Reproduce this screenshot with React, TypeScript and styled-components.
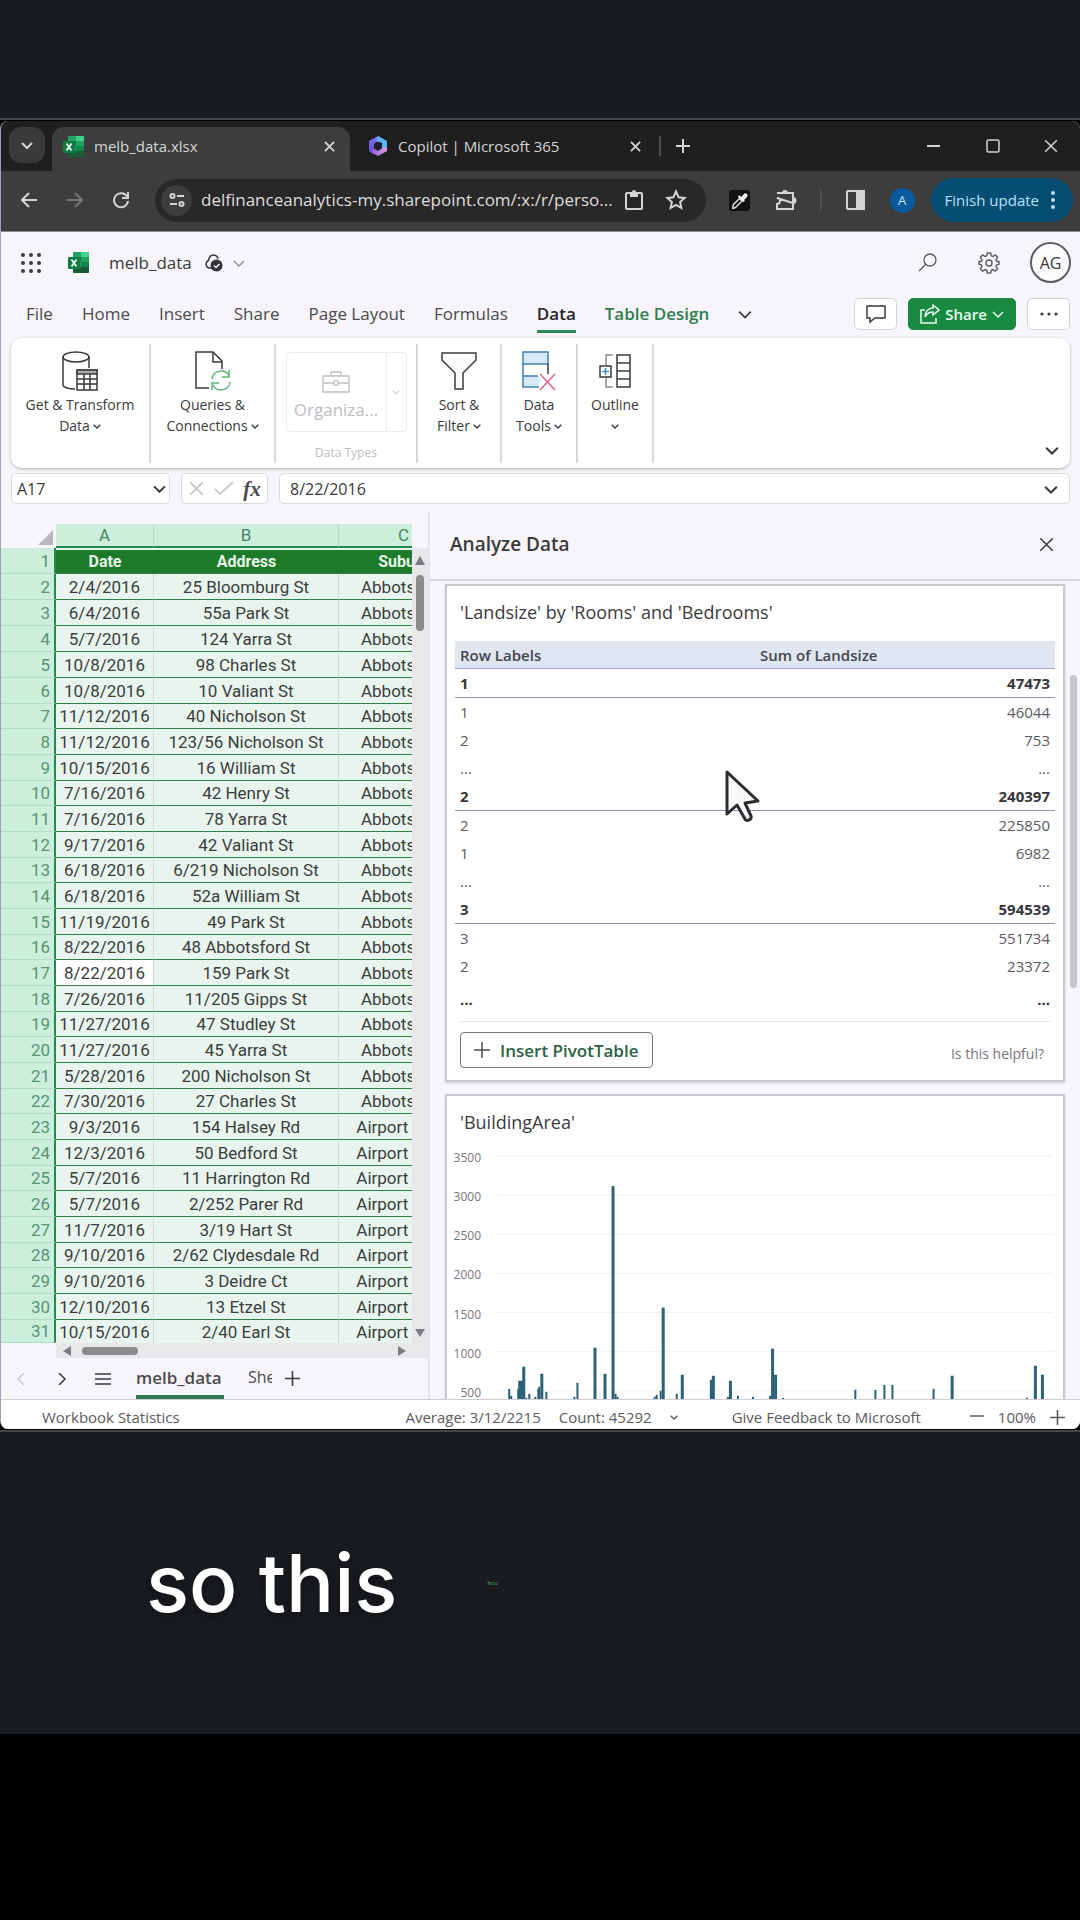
import React from "react";
import styled, { createGlobalStyle, css } from "styled-components";

const GlobalStyle = createGlobalStyle`
  *, *::before, *::after { box-sizing: border-box; }
  body { margin: 0; background: #000; }
  button, input { font: inherit; color: inherit; margin: 0; padding: 0; border: 0; background: none; }
  svg { display: block; flex: none; }
`;

const ui = `"Segoe UI", "Open Sans", "Noto Sans", sans-serif`;

const Page = styled.div`
  min-height: 100vh;
  background: #000;
  font-family: ${ui};
  color: #3b3a3d;
`;

const Stage = styled.div`
  background: #181c1e;
  padding-top: 118px;
`;

const Frame = styled.div`
  border-top: 2px solid #444748;
  border-bottom: 2px solid #444748;
  background: #000;
  padding: 1px 0;
`;

const Window = styled.main`
  border-left: 1px solid #9aa3b5;
  border-radius: 8px;
  overflow: hidden;
  background: #f7f5f9;
`;

/* ---------- browser chrome ---------- */

const TabStrip = styled.div`
  display: flex;
  height: 50px;
  padding: 6px 8px 0;
  background: #1f1f1f;
  color: #d4d4d4;
  font-size: 15px;
`;

const TabSearch = styled.button`
  display: grid;
  place-items: center;
  width: 36px;
  height: 36px;
  margin-right: 7px;
  border-radius: 12px;
  background: #3a3a3a;
`;

const Tab = styled.div<{ $active?: boolean }>`
  display: flex;
  align-items: center;
  gap: 10px;
  width: ${(p) => (p.$active ? 298 : 309)}px;
  min-width: 0;
  height: 44px;
  padding: 0 ${(p) => (p.$active ? 15 : 18)}px 6px ${(p) => (p.$active ? 11 : 18)}px;
  border-radius: 12px 12px 0 0;
  background: ${(p) => (p.$active ? "#3d3d3d" : "transparent")};
`;

const TabTitle = styled.span`
  flex: 1;
  min-width: 0;
  overflow: hidden;
  white-space: nowrap;
`;

const PlainButton = styled.button`
  display: grid;
  place-items: center;
  flex: none;
`;

const StripTail = styled.div`
  display: flex;
  align-items: center;
  flex: 1;
  height: 38px;
`;

const ThinRule = styled.span<{ $inset?: number }>`
  width: 2px;
  height: 20px;
  margin: 0 ${(p) => p.$inset ?? 0}px;
  background: #4e4e4e;
`;

const NewTab = styled(PlainButton)`
  width: 44px;
  height: 28px;
`;

const WindowButtons = styled.div`
  display: flex;
  margin-left: auto;
`;

const WindowButton = styled(PlainButton)`
  width: 59px;
  height: 32px;

  &:last-child {
    width: 42px;
    margin-left: 8px;
  }
`;

const Toolbar = styled.div`
  display: flex;
  align-items: center;
  height: 61px;
  padding: 0 7px 2px 5px;
  border-bottom: 1px solid #8a8a8c;
  background: #3d3d3d;
  color: #d4d4d4;
`;

const NavButton = styled(PlainButton)<{ $dim?: boolean }>`
  width: 46px;
  height: 40px;
  color: ${(p) => (p.$dim ? "#777" : "inherit")};
`;

const Omnibox = styled.div`
  display: flex;
  align-items: center;
  flex: 1;
  min-width: 0;
  height: 43px;
  margin-left: 11px;
  padding: 0 9px 0 6px;
  border-radius: 22px;
  background: #282828;
`;

const SiteChip = styled(PlainButton)`
  width: 31px;
  height: 31px;
  border-radius: 50%;
  background: #3d3d3d;
`;

const AddressInput = styled.input`
  flex: 1;
  min-width: 0;
  margin-left: 9px;
  font-size: 17px;
  line-height: 24px;
  color: #dedede;
`;

const OmniButton = styled(PlainButton)`
  width: 42px;
  height: 40px;
`;

const Extensions = styled.div`
  display: flex;
  align-items: center;
  margin: 0 5px 0 10px;
`;

const ExtButton = styled(PlainButton)`
  width: 47px;
  height: 40px;
`;

const ProfileDot = styled.span`
  display: grid;
  place-items: center;
  width: 25px;
  height: 25px;
  border-radius: 50%;
  background: #0b5a9e;
  color: #cfe4f7;
  font-size: 13px;
`;

const UpdateButton = styled.button`
  display: flex;
  align-items: center;
  gap: 12px;
  height: 44px;
  padding: 0 18px 0 14px;
  border-radius: 22px;
  background: #064d73;
  color: #b5e0f8;
  font-size: 15px;
`;

/* ---------- workbook header ---------- */

const TitleRow = styled.header`
  display: flex;
  align-items: center;
  height: 61px;
  padding: 0 9px 0 20px;
`;

const AppMark = styled.span`
  margin-left: 27px;
`;

const FileName = styled.h1`
  margin: 0 12px 0 20px;
  font-size: 17px;
  line-height: 24px;
  font-weight: 400;
`;

const FileMenu = styled(PlainButton)`
  margin-left: 10px;
  color: #8a898d;
`;

const TitleTools = styled.div`
  display: flex;
  align-items: center;
  margin-left: auto;
`;

const ToolButton = styled(PlainButton)`
  width: 62px;
  height: 40px;
  color: #5b5a5e;
`;

const Account = styled.button`
  width: 41px;
  height: 41px;
  margin-left: 10px;
  border: 2px solid #5d5c60;
  border-radius: 50%;
  background: #fbfafc;
  font-size: 16px;
`;

const MenuRow = styled.nav`
  display: flex;
  align-items: flex-start;
  height: 45px;
  padding: 5px 10px 0 25px;
`;

const MenuItem = styled.button<{ $active?: boolean; $accent?: boolean }>`
  margin-right: 29px;
  padding: 4px 0;
  border-bottom: 3px solid ${(p) => (p.$active ? "#2b8a57" : "transparent")};
  font-size: 17px;
  line-height: 24px;
  white-space: nowrap;
  color: ${(p) => (p.$accent ? "#2f7d51" : p.$active ? "#252427" : "#4b4a4e")};
  font-weight: ${(p) => (p.$active || p.$accent ? 600 : 400)};
`;

const MoreTabs = styled(PlainButton)`
  height: 32px;
`;

const MenuActions = styled.div`
  display: flex;
  gap: 11px;
  margin-left: auto;
`;

const ActionButton = styled.button<{ $primary?: boolean }>`
  display: flex;
  align-items: center;
  justify-content: center;
  gap: 5px;
  width: ${(p) => (p.$primary ? 108 : 43)}px;
  height: 32px;
  border: 1px solid #d6d4d8;
  border-radius: 5px;
  background: #fff;
  font-size: 15px;
  ${(p) =>
    p.$primary &&
    css`
      border-color: #188a42;
      background: #188a42;
      color: #e9fbee;
      font-weight: 600;
    `}
`;

const Ribbon = styled.section`
  display: flex;
  height: 130px;
  margin: 0 10px;
  padding: 6px 11px 5px 0;
  border-radius: 10px;
  background: #fff;
  box-shadow: 0 1px 3px rgba(0, 0, 0, 0.28);
`;

const Group = styled.div<{ $width: number }>`
  width: ${(p) => p.$width}px;
  border-right: 2px solid #d9d8da;
`;

const GroupButton = styled.button`
  display: flex;
  flex-direction: column;
  align-items: center;
  width: 100%;
  padding-top: 7px;
  font-size: 14px;
  line-height: 21px;
`;

const GroupIcon = styled.span`
  display: grid;
  place-items: center;
  height: 40px;
  margin-bottom: 3px;
`;

const GroupLine = styled.span`
  display: flex;
  align-items: center;
  gap: 3px;
  min-height: 21px;
  white-space: nowrap;
`;

const DataTypes = styled.div`
  display: flex;
  flex-direction: column;
  align-items: center;
  padding-top: 8px;
  color: #bdbcbf;
`;

const Gallery = styled.div`
  display: flex;
  width: 121px;
  height: 80px;
  border: 1px solid #ebeaec;
  border-radius: 4px;
`;

const GalleryItem = styled.button`
  display: flex;
  flex-direction: column;
  align-items: center;
  justify-content: flex-end;
  gap: 5px;
  width: 100px;
  padding-bottom: 9px;
  border-right: 1px solid #ebeaec;
  font-size: 17px;
  line-height: 24px;
`;

const GalleryMore = styled(PlainButton)`
  flex: 1;
`;

const GroupCaption = styled.span`
  margin-top: 12px;
  font-size: 12px;
  line-height: 18px;
`;

const RibbonToggle = styled(PlainButton)`
  align-self: flex-end;
  margin-left: auto;
  height: 26px;
`;

const FormulaRow = styled.div`
  display: flex;
  gap: 11px;
  margin: 5px 10px 7px;
`;

const FieldBox = styled.div<{ $width?: number }>`
  display: flex;
  align-items: center;
  height: 31px;
  ${(p) => (p.$width ? `width: ${p.$width}px;` : "flex: 1; min-width: 0;")}
  border: 1px solid #dcdadf;
  border-radius: 5px;
  background: #fff;
`;

const FieldInput = styled.input<{ $inset: number }>`
  flex: 1;
  min-width: 0;
  padding-left: ${(p) => p.$inset}px;
  font-size: 16px;
  line-height: 22px;
`;

const FieldButton = styled(PlainButton)<{ $dim?: boolean }>`
  width: 28px;
  height: 28px;
  color: ${(p) => (p.$dim ? "#bdbcbf" : "inherit")};
`;

const OpenButton = styled(PlainButton)<{ $end: number }>`
  margin-right: ${(p) => p.$end}px;
`;

const Fx = styled.i`
  font-family: "Liberation Serif", serif;
  font-size: 21px;
  line-height: 24px;
  font-weight: 700;
  color: #4b4a4e;
`;

/* ---------- sheet ---------- */

const Workspace = styled.div`
  display: grid;
  grid-template-columns: minmax(0, 427fr) minmax(0, 652fr);
  border-bottom: 1px solid #cfcdd1;
`;

const SheetColumn = styled.section`
  padding-top: 13px;
`;

const GridArea = styled.div`
  display: flex;
`;

const GridClip = styled.div`
  flex: 1;
  min-width: 0;
  overflow: hidden;
`;

const Sheet = styled.table`
  width: 468px;
  table-layout: fixed;
  border-collapse: separate;
  border-spacing: 0;
  font-family: Roboto, "Liberation Sans", sans-serif;
  font-size: 17px;
  line-height: 20px;
  color: #3a3f3d;
`;

const Column = styled.col<{ $width: number }>`
  width: ${(p) => p.$width}px;
`;

const ColHead = styled.th`
  height: 24px;
  padding: 0;
  border-right: 1px solid #b3dcc8;
  border-bottom: 2px solid #2a8454;
  background: #ccefdc;
  color: #488264;
  font-weight: 400;
`;

const Corner = styled.td`
  height: 24px;
  padding: 0 3px 3px 0;
  vertical-align: bottom;

  svg { margin-left: auto; }
`;

const SheetRow = styled.tr`
  height: 26px;
  &:nth-child(3n + 7) { height: 25px; }
  &:last-child { height: 23px; }
`;

const RowHead = styled.th`
  padding: 0 4px 0 0;
  border-right: 2px solid #2a8454;
  border-bottom: 1px solid #b3dcc8;
  background: #ccefdc;
  color: #5a9276;
  font-weight: 400;
  text-align: right;
`;

const Cell = styled.td<{ $head?: boolean; $active?: boolean }>`
  padding: 0;
  overflow: hidden;
  text-align: center;
  white-space: nowrap;
  border-right: 1px solid #c7dcd2;
  border-bottom: 1px solid #2f7f4a;
  background: ${(p) => (p.$active ? "#fff" : "#e9f4ef")};

  ${SheetRow}:last-child & { border-bottom: 0; }

  ${(p) =>
    p.$head &&
    css`
      border-top: 2px solid #e4f7ec;
      border-right: 0;
      background: #1d7a2b;
      color: #e6f5e8;
      font-size: 16px;
      font-weight: 700;
    `}
`;

const VScroll = styled.div`
  display: flex;
  flex-direction: column;
  align-items: center;
  width: 16px;
  margin-top: 24px;
  padding: 8px 0 6px;
  background: #e9e7e9;
`;

const VThumb = styled.span`
  width: 8px;
  height: 56px;
  margin: 10px 0 auto;
  border-radius: 4px;
  background: #8d8b8e;
`;

const HScroll = styled.div`
  display: flex;
  align-items: center;
  height: 15px;
  margin-left: 55px;
  padding: 0 22px 0 7px;
  background: #e9e7e9;
`;

const HThumb = styled.span`
  width: 56px;
  height: 8px;
  margin: 0 auto 0 11px;
  border-radius: 4px;
  background: #8d8b8e;
`;

const SheetTabs = styled.div`
  display: flex;
  align-items: stretch;
  height: 41px;
  padding-left: 12px;
`;

const SheetNav = styled(PlainButton)<{ $width: number; $dim?: boolean }>`
  width: ${(p) => p.$width}px;
  color: ${(p) => (p.$dim ? "#c7c5c9" : "inherit")};
`;

const TabGroup = styled.div`
  display: flex;
  margin-left: 25px;
`;

const SheetTab = styled.button<{ $active?: boolean }>`
  flex: none;
  width: ${(p) => (p.$active ? 88 : 24)}px;
  margin-right: ${(p) => (p.$active ? 24 : 9)}px;
  overflow: hidden;
  white-space: nowrap;
  text-align: left;
  border-top: 1px solid transparent;
  border-bottom: 4px solid ${(p) => (p.$active ? "#2f7d51" : "transparent")};
  font-size: ${(p) => (p.$active ? 17 : 16)}px;
  font-weight: ${(p) => (p.$active ? 600 : 400)};
  color: #4b4a4e;
`;

/* ---------- Analyze Data pane ---------- */

const Pane = styled.aside`
  contain: size;
  overflow: hidden;
  border-left: 2px solid #e6e4e8;
`;

const PaneHead = styled.div`
  display: flex;
  align-items: center;
  justify-content: space-between;
  height: 70px;
  padding: 0 26px 2px 20px;
  border-bottom: 2px solid #d8d6da;
`;

const PaneTitle = styled.h2`
  margin: 0;
  font-size: 19px;
  line-height: 24px;
  font-weight: 600;
`;

const PaneBody = styled.div`
  display: flex;
  padding: 3px 3px 0 15px;
`;

const Cards = styled.div`
  flex: 1;
  min-width: 0;
  display: flex;
  flex-direction: column;
  gap: 12px;
`;

const PaneThumb = styled.span`
  width: 7px;
  height: 313px;
  margin: 91px 0 0 5px;
  border-radius: 4px;
  background: #c7c5c9;
`;

const Card = styled.article`
  position: relative;
  padding: 14px 8px 0;
  border: 2px solid #c9c7cb;
  background: #fff;
  box-shadow: 0 1px 2px rgba(0, 0, 0, 0.15);
`;

const CardTitle = styled.h3`
  margin: 0 5px;
  font-size: 18px;
  line-height: 24px;
  font-weight: 400;
`;

const Pivot = styled.table`
  width: 100%;
  margin-top: 17px;
  border-collapse: separate;
  border-spacing: 0;
  font-size: 15px;
  line-height: 20px;
  color: #5b5a5e;
`;

const PivotHead = styled.th`
  width: 50%;
  height: 28px;
  padding: 0 5px;
  border-bottom: 1px solid #9aa3cf;
  background: #dfe6f2;
  color: #44464e;
  font-weight: 600;
  text-align: left;
`;

const PivotCell = styled.td<{ $group?: boolean; $right?: boolean; $last?: boolean }>`
  height: ${(p) => (p.$group ? 29 : p.$last ? 32 : 28)}px;
  padding: ${(p) => (p.$last ? 7 : 0)}px 5px 1px;
  text-align: ${(p) => (p.$right ? "right" : "left")};
  ${(p) =>
    p.$group &&
    css`
      border-bottom: 1px solid #8c90b4;
    `}
  ${(p) =>
    (p.$group || p.$last) &&
    css`
      font-weight: 700;
      color: #37363a;
    `}
`;

const CardFoot = styled.div`
  display: flex;
  align-items: center;
  justify-content: space-between;
  margin: 9px 5px 0;
  padding: 10px 6px 12px 0;
  border-top: 1px solid #e6e5e8;
`;

const InsertButton = styled.button`
  display: flex;
  align-items: center;
  gap: 10px;
  height: 36px;
  padding: 0 13px;
  border: 1px solid #77767a;
  border-radius: 4px;
  background: #fff;
  font-size: 17px;
  font-weight: 600;
  color: #2c6144;
`;

const Helpful = styled.a`
  margin-top: 8px;
  font-size: 14px;
  line-height: 20px;
  color: #77767a;
  text-decoration: none;
`;

const Pointer = styled.svg`
  position: absolute;
  left: 278px;
  top: 184px;
`;

const ChartBox = styled.div`
  margin: 2px -8px 0;
`;

/* ---------- status bar & caption ---------- */

const StatusBar = styled.footer`
  display: flex;
  align-items: center;
  height: 29px;
  padding: 5px 15px 0 41px;
  background: #fff;
  font-size: 15px;
  line-height: 20px;
  color: #5b5a5e;
  white-space: nowrap;
`;

const Totals = styled.div`
  display: flex;
  align-items: center;
  gap: 18px;
  margin: 0 54px 0 auto;
`;

const Feedback = styled.span`
  margin-right: 49px;
`;

const ZoomGroup = styled.div`
  display: flex;
  align-items: center;
  gap: 14px;
`;

const Caption = styled.div`
  display: flex;
  align-items: center;
  gap: 90px;
  height: 302px;
  padding: 0 146px;
`;

const CaptionText = styled.p`
  margin: 0;
  font-family: Inter, "Open Sans", sans-serif;
  font-size: 80px;
  line-height: 110px;
  font-weight: 500;
  color: #fff;
  text-shadow: 0 4px 10px rgba(20, 10, 20, 0.6);
`;

const NextWord = styled.span`
  font-size: 6px;
  line-height: 8px;
  color: #5fb878;
`;

/* ---------- drawings ---------- */

type IconProps = { size?: number; w?: number; h?: number; box: string; sw?: number; children: React.ReactNode };
const Icon = ({ size = 20, w, h, box, sw = 2, children }: IconProps) => (
  <svg width={w ?? size} height={h ?? size} viewBox={box} fill="none" stroke="currentColor" strokeWidth={sw} aria-hidden="true">
    {children}
  </svg>
);

const Chevron = ({ w = 12, sw = 2, dir = "down" }: { w?: number; sw?: number; dir?: "down" | "left" | "right" }) => {
  const d = { down: "M1 4l5 5 5-5", left: "M9 0L3 6l6 6", right: "M3 0l6 6-6 6" }[dir];
  return (
    <Icon size={w} box="0 0 12 12" sw={sw}>
      <path d={d} />
    </Icon>
  );
};

const Cross = ({ size = 12, sw = 2 }: { size?: number; sw?: number }) => (
  <Icon size={size} box="0 0 12 12" sw={sw}>
    <path d="M1 1l10 10M11 1L1 11" />
  </Icon>
);

const Plus = ({ size = 14, sw = 2, color }: { size?: number; sw?: number; color?: string }) => (
  <Icon size={size} box="0 0 14 14" sw={sw}>
    <path d="M7 0v14M0 7h14" stroke={color} />
  </Icon>
);

const ExcelLogo = () => (
  <svg width="21" height="21" viewBox="0 0 21 21" aria-hidden="true">
    <rect x="5" y="0" width="16" height="21" rx="1" fill="#21a366" />
    <path d="M13 0h7a1 1 0 0 1 1 1v4h-8z" fill="#3fd08c" />
    <path d="M5 5h8v5H5z" fill="#107c41" />
    <path d="M13 10h8v5h-8z" fill="#10864a" />
    <path d="M5 15h16v5a1 1 0 0 1-1 1H6a1 1 0 0 1-1-1z" fill="#185c37" />
    <rect x="0" y="5" width="12" height="12" rx="1" fill="#107c41" />
    <path d="M3.500 7.500l5 7M8.500 7.500l-5 7" stroke="#eaf7ef" strokeWidth="1.800" />
  </svg>
);

const CopilotLogo = () => (
  <svg width="20" height="22" viewBox="0 0 20 22" aria-hidden="true">
    <defs>
      <linearGradient id="cpA" x1="0" y1="0" x2="0" y2="1">
        <stop offset="0" stopColor="#8a6cf0" />
        <stop offset="1" stopColor="#5b4bc9" />
      </linearGradient>
      <linearGradient id="cpB" x1="0" y1="0" x2="1" y2="0">
        <stop offset="0" stopColor="#7a5be8" />
        <stop offset="1" stopColor="#e39bd8" />
      </linearGradient>
    </defs>
    <path d="M10 1L1 6v10l5 3 1-11 8-4z" fill="url(#cpA)" />
    <path d="M10 1l9 5v8l-5-1V8L8 6z" fill="#5cb4ee" />
    <path d="M19 13v3l-9 5-8-4 4-3 5 1 4-3z" fill="url(#cpB)" />
    <path d="M10 7l4 2v4l-4 3-4-3V9z" fill="#1f1f2e" />
  </svg>
);

const bars: [number, number][] = [
  [80, 10], [82, 3], [89, 10], [90, 18], [92, 18], [94, 32], [97, 1], [100, 5], [106, 2], [109, 10], [110, 12],
  [112, 25], [117, 7], [145, 2], [148, 16], [165, 51], [175, 25], [183, 212], [186, 5], [188, 2], [225, 2],
  [227, 4], [231, 8], [233, 91], [247, 5], [252, 24], [281, 19], [283, 23], [298, 2], [300, 18], [308, 3],
  [323, 2], [340, 3], [342, 50], [345, 24], [353, 1], [425, 9], [445, 9], [454, 14], [462, 14], [503, 10],
  [521, 23], [596, 1], [604, 33], [611, 24],
];
const ticks = [3500, 3000, 2500, 2000, 1500, 1000, 500];

const AreaChart = () => (
  <svg width="100%" viewBox="18 0 614 300" role="img" aria-label="BuildingArea chart">
    {ticks.map((t, i) => (
      <g key={t}>
        <path d={`M67 ${20 + i * 39}H622`} stroke="#f0f0f2" />
        <text x="52" y={26 + i * 39} textAnchor="end" fontSize="12" fill="#77767a">
          {t}
        </text>
      </g>
    ))}
    {bars.map(([x, h], i) => (
      <rect key={i} x={x - 1} y={262 - h} width={h > 17 ? 3 : 2} height={h + 34} fill="#2d6377" />
    ))}
  </svg>
);

/* ---------- data ---------- */

const rows: [string, string, string][] = [
  ["Date", "Address", "Suburb"],
  ["2/4/2016", "25 Bloomburg St", "Abbotsford"],
  ["6/4/2016", "55a Park St", "Abbotsford"],
  ["5/7/2016", "124 Yarra St", "Abbotsford"],
  ["10/8/2016", "98 Charles St", "Abbotsford"],
  ["10/8/2016", "10 Valiant St", "Abbotsford"],
  ["11/12/2016", "40 Nicholson St", "Abbotsford"],
  ["11/12/2016", "123/56 Nicholson St", "Abbotsford"],
  ["10/15/2016", "16 William St", "Abbotsford"],
  ["7/16/2016", "42 Henry St", "Abbotsford"],
  ["7/16/2016", "78 Yarra St", "Abbotsford"],
  ["9/17/2016", "42 Valiant St", "Abbotsford"],
  ["6/18/2016", "6/219 Nicholson St", "Abbotsford"],
  ["6/18/2016", "52a William St", "Abbotsford"],
  ["11/19/2016", "49 Park St", "Abbotsford"],
  ["8/22/2016", "48 Abbotsford St", "Abbotsford"],
  ["8/22/2016", "159 Park St", "Abbotsford"],
  ["7/26/2016", "11/205 Gipps St", "Abbotsford"],
  ["11/27/2016", "47 Studley St", "Abbotsford"],
  ["11/27/2016", "45 Yarra St", "Abbotsford"],
  ["5/28/2016", "200 Nicholson St", "Abbotsford"],
  ["7/30/2016", "27 Charles St", "Abbotsford"],
  ["9/3/2016", "154 Halsey Rd", "Airport West"],
  ["12/3/2016", "50 Bedford St", "Airport West"],
  ["5/7/2016", "11 Harrington Rd", "Airport West"],
  ["5/7/2016", "2/252 Parer Rd", "Airport West"],
  ["11/7/2016", "3/19 Hart St", "Airport West"],
  ["9/10/2016", "2/62 Clydesdale Rd", "Airport West"],
  ["9/10/2016", "3 Deidre Ct", "Airport West"],
  ["12/10/2016", "13 Etzel St", "Airport West"],
  ["10/15/2016", "2/40 Earl St", "Airport West"],
];

const pivot: { label: string; value: string; group?: boolean; last?: boolean }[] = [
  { label: "1", value: "47473", group: true },
  { label: "1", value: "46044" },
  { label: "2", value: "753" },
  { label: "...", value: "..." },
  { label: "2", value: "240397", group: true },
  { label: "2", value: "225850" },
  { label: "1", value: "6982" },
  { label: "...", value: "..." },
  { label: "3", value: "594539", group: true },
  { label: "3", value: "551734" },
  { label: "2", value: "23372" },
  { label: "...", value: "...", last: true },
];

/* ---------- sections ---------- */

const BrowserChrome = () => (
  <>
    <TabStrip>
      <TabSearch aria-label="Search tabs">
        <Chevron w={12} sw={2} />
      </TabSearch>
      <Tab $active>
        <ExcelLogo />
        <TabTitle>melb_data.xlsx</TabTitle>
        <PlainButton aria-label="Close tab">
          <Cross size={11} />
        </PlainButton>
      </Tab>
      <Tab>
        <CopilotLogo />
        <TabTitle>Copilot | Microsoft 365</TabTitle>
        <PlainButton aria-label="Close tab">
          <Cross size={11} />
        </PlainButton>
      </Tab>
      <StripTail>
        <ThinRule />
        <NewTab aria-label="New tab">
          <Plus size={14} />
        </NewTab>
        <WindowButtons>
          <WindowButton aria-label="Minimize">
            <Icon size={13} box="0 0 13 13">
              <path d="M0 6h13" />
            </Icon>
          </WindowButton>
          <WindowButton aria-label="Maximize">
            <Icon size={14} box="0 0 14 14" sw={1.5}>
              <rect x="1" y="1" width="12" height="12" rx="1.500" />
            </Icon>
          </WindowButton>
          <WindowButton aria-label="Close">
            <Cross size={14} sw={1.3} />
          </WindowButton>
        </WindowButtons>
      </StripTail>
    </TabStrip>
    <Toolbar>
      <NavButton aria-label="Back">
        <Icon size={16} box="0 0 16 16">
          <path d="M16 8H2M8 1L1 8l7 7" />
        </Icon>
      </NavButton>
      <NavButton aria-label="Forward" $dim>
        <Icon size={16} box="0 0 16 16">
          <path d="M0 8h14M8 1l7 7-7 7" />
        </Icon>
      </NavButton>
      <NavButton aria-label="Reload">
        <Icon size={18} box="0 0 18 18">
          <path d="M15 5.500A7 7 0 1 0 16 10M16 1v6h-6" />
        </Icon>
      </NavButton>
      <Omnibox>
        <SiteChip aria-label="Site information">
          <Icon size={18} box="0 0 18 18">
            <circle cx="4.500" cy="5" r="2" />
            <path d="M9 5h7M2 13h7" />
            <circle cx="13.500" cy="13" r="2" />
          </Icon>
        </SiteChip>
        <AddressInput aria-label="Address" defaultValue="delfinanceanalytics-my.sharepoint.com/:x:/r/perso..." />
        <OmniButton aria-label="Clipboard">
          <Icon w={20} h={22} box="0 0 20 22">
            <rect x="2" y="4" width="16" height="16" rx="1" />
            <path d="M6 3h8v5H6z" fill="currentColor" stroke="none" />
            <circle cx="10" cy="3" r="2" fill="currentColor" stroke="none" />
          </Icon>
        </OmniButton>
        <OmniButton aria-label="Bookmark">
          <Icon size={22} box="0 0 22 22">
            <path d="M11 2.500l2.600 5.700 6 .7-4.500 4.100 1.300 6.100L11 16l-5.400 3.100 1.300-6.100L2.400 8.900l6-.7z" />
          </Icon>
        </OmniButton>
      </Omnibox>
      <Extensions>
        <ExtButton aria-label="Colour picker">
          <svg width="21" height="21" viewBox="0 0 21 21">
            <rect width="21" height="21" rx="3" fill="#121212" />
            <path d="M12 7l3-3a2 2 0 0 1 3 3l-3 3 1 1-2 1-5-5 1-2z" fill="#fff" />
            <path d="M10.500 8.500l2.500 2.500-6 6c-1 1-2 .8-3 1.500-.8-.8 0-2 .5-4z" fill="none" stroke="#ddd" strokeWidth="1.500" />
          </svg>
        </ExtButton>
        <ExtButton aria-label="Extensions">
          <Icon w={22} h={22} box="0 0 22 22">
            <path d="M2 4h16v5M18 14v6H2v-5a3 3 0 0 0 0-6zM18 8v7" />
            <path d="M7 4a3 3 0 0 1 6 0zM18 8a3 3 0 0 1 0 7z" fill="currentColor" stroke="none" />
          </Icon>
        </ExtButton>
        <ThinRule $inset={10} />
        <ExtButton aria-label="Side panel">
          <Icon w={19} h={20} box="0 0 19 20">
            <rect x="1" y="1" width="17" height="18" rx="1" />
            <path d="M11 1h7v18h-7z" fill="currentColor" />
          </Icon>
        </ExtButton>
        <ExtButton aria-label="Profile">
          <ProfileDot>A</ProfileDot>
        </ExtButton>
      </Extensions>
      <UpdateButton>
        Finish update
        <svg width="4" height="18" viewBox="0 0 4 18" fill="#b5e0f8">
          <circle cx="2" cy="2" r="2" />
          <circle cx="2" cy="9" r="2" />
          <circle cx="2" cy="16" r="2" />
        </svg>
      </UpdateButton>
    </Toolbar>
  </>
);

const WorkbookHeader = () => (
  <>
    <TitleRow>
      <PlainButton aria-label="App launcher">
        <svg width="20" height="20" viewBox="0 0 20 20" fill="#3b3a3d">
          {[2, 10, 18].map((y) => [2, 10, 18].map((x) => <circle key={`${x}-${y}`} cx={x} cy={y} r="2" />))}
        </svg>
      </PlainButton>
      <AppMark>
        <ExcelLogo />
      </AppMark>
      <FileName>melb_data</FileName>
      <Icon w={19} h={18} box="0 0 19 18" sw={1.5}>
        <path d="M8 14H5a4 4 0 0 1-.5-7.500C5 3 7 1 9.500 1s4 1.600 4.500 4" />
        <circle cx="12.500" cy="11.500" r="6" fill="#333236" stroke="none" />
        <path d="M10 11.500l2 2 3.500-3.500" stroke="#fff" />
      </Icon>
      <FileMenu aria-label="File options">
        <Chevron w={12} sw={1.3} />
      </FileMenu>
      <TitleTools>
        <ToolButton aria-label="Search">
          <Icon size={19} box="0 0 19 19" sw={1.3}>
            <circle cx="12" cy="7" r="6" />
            <path d="M7.500 11.500L1 18" />
          </Icon>
        </ToolButton>
        <ToolButton aria-label="Settings">
          <Icon size={22} box="0 0 22 22" sw={1.4}>
            <path d="M9.300 1h3.400l.5 2.800 1.700.7 2.400-1.600 2.300 2.300L18 7.600l.7 1.700 2.300.4v2.600l-2.300.5-.7 1.700 1.600 2.400-2.300 2.300-2.400-1.600-1.700.7-.5 2.700H9.300l-.5-2.700-1.700-.7-2.400 1.600-2.300-2.300L4 14.500l-.7-1.700L1 12.300V9.700l2.300-.4L4 7.600 2.400 5.200l2.300-2.300 2.400 1.600 1.700-.7z" />
            <circle cx="11" cy="11" r="3" />
          </Icon>
        </ToolButton>
        <Account>AG</Account>
      </TitleTools>
    </TitleRow>
    <MenuRow>
      {["File", "Home", "Insert", "Share", "Page Layout", "Formulas"].map((m) => (
        <MenuItem key={m}>{m}</MenuItem>
      ))}
      <MenuItem $active>Data</MenuItem>
      <MenuItem $accent>Table Design</MenuItem>
      <MoreTabs aria-label="More tabs">
        <Chevron w={14} sw={1.5} />
      </MoreTabs>
      <MenuActions>
        <ActionButton aria-label="Comments">
          <Icon size={20} box="0 0 20 20" sw={1.5}>
            <path d="M1 2h18v12H9l-5 4v-4H1z" />
          </Icon>
        </ActionButton>
        <ActionButton $primary>
          <Icon size={20} box="0 0 20 20" sw={1.5}>
            <path d="M5 6H1v13h15v-5" />
            <path d="M13 1l6 5-6 5V8c-4 0-6 1-8 5 0-5 3-9 8-9z" />
          </Icon>
          Share
          <Chevron w={12} sw={1.5} />
        </ActionButton>
        <ActionButton aria-label="More options">
          <svg width="18" height="4" viewBox="0 0 18 4" fill="#3b3a3d">
            <circle cx="2" cy="2" r="1.600" />
            <circle cx="9" cy="2" r="1.600" />
            <circle cx="16" cy="2" r="1.600" />
          </svg>
        </ActionButton>
      </MenuActions>
    </MenuRow>
  </>
);

const RibbonGroup = ({ width, lines, icon }: { width: number; lines: [string, string]; icon: React.ReactNode }) => (
  <Group $width={width}>
    <GroupButton>
      <GroupIcon>{icon}</GroupIcon>
      <GroupLine>{lines[0]}</GroupLine>
      <GroupLine>
        {lines[1]}
        <Chevron w={8} sw={2} />
      </GroupLine>
    </GroupButton>
  </Group>
);

const RibbonBar = () => (
  <Ribbon>
    <RibbonGroup
      width={140}
      lines={["Get & Transform", "Data"]}
      icon={
        <Icon w={36} h={40} box="0 0 36 40" sw={1.5}>
          <path d="M1 6v28c0 2 5 4 12 4M27 6v11" />
          <ellipse cx="14" cy="6" rx="13" ry="5" />
          <rect x="15" y="19" width="20" height="20" fill="#fff" />
          <path d="M15 19h20v4H15z" fill="#a9a8ab" />
          <path d="M15 28h20M15 33h20M22 23v16M28 23v16" />
        </Icon>
      }
    />
    <RibbonGroup
      width={125}
      lines={["Queries &", "Connections"]}
      icon={
        <Icon w={36} h={40} box="0 0 36 40" sw={1.5}>
          <path d="M14 37H1V1h17l9 9v8" />
          <path d="M18 1v10h9" />
          <g stroke="#5fb67b">
            <path d="M17 28a9 9 0 0 1 17-3M34 19v7h-7" />
            <path d="M35 31a9 9 0 0 1-17 3M17 39v-7h7" />
          </g>
        </Icon>
      }
    />
    <Group $width={142}>
      <DataTypes>
        <Gallery>
          <GalleryItem>
            <Icon w={28} h={22} box="0 0 28 22" sw={1.3}>
              <path d="M1 5h26v16H1zM1 12h11M16 12h11M9 5V1h10v4" />
              <rect x="12" y="10" width="4" height="4" />
            </Icon>
            Organiza...
          </GalleryItem>
          <GalleryMore aria-label="More data types">
            <Chevron w={8} sw={1.5} />
          </GalleryMore>
        </Gallery>
        <GroupCaption>Data Types</GroupCaption>
      </DataTypes>
    </Group>
    <RibbonGroup
      width={84}
      lines={["Sort &", "Filter"]}
      icon={
        <Icon w={36} h={38} box="0 0 36 38" sw={1.5}>
          <path d="M1 1h34v7L22 21v16h-8V21L1 8z" fill="#fbfafc" />
        </Icon>
      }
    />
    <RibbonGroup
      width={76}
      lines={["Data", "Tools"]}
      icon={
        <Icon w={34} h={40} box="0 0 34 40" sw={1.5}>
          <path d="M1 1h25v12H1z" fill="#d6e9f8" stroke="#4480ad" />
          <path d="M1 25h15l3 3-3 8H1z" fill="#d6e9f8" stroke="none" />
          <path d="M1 13v23h16M1 25h15" stroke="#4480ad" />
          <path d="M26 13v10" />
          <path d="M18 23l15 16M33 23L18 39" stroke="#e0607f" />
        </Icon>
      }
    />
    <RibbonGroup
      width={76}
      lines={["Outline", ""]}
      icon={
        <Icon w={32} h={34} box="0 0 32 34" sw={1.5}>
          <path d="M18 1h13v32H18zM18 9h13M18 17h13M18 25h13" />
          <path d="M14 1H7v10M7 23v10h7" stroke="#8a898d" />
          <path d="M1 12h11v11H1z" />
          <path d="M6.500 14v7M3 17.500h7" stroke="#3b8fc4" />
        </Icon>
      }
    />
    <RibbonToggle aria-label="Collapse ribbon">
      <Chevron w={14} sw={1.8} />
    </RibbonToggle>
  </Ribbon>
);

const FormulaBar = () => (
  <FormulaRow>
    <FieldBox $width={159}>
      <FieldInput aria-label="Name box" defaultValue="A17" $inset={5} />
      <OpenButton aria-label="Open name list" $end={3}>
        <Chevron w={13} sw={1.8} />
      </OpenButton>
    </FieldBox>
    <FieldBox $width={87}>
      <FieldButton aria-label="Cancel" $dim>
        <Cross size={15} sw={1.2} />
      </FieldButton>
      <FieldButton aria-label="Enter" $dim>
        <Icon w={20} h={15} box="0 0 20 15" sw={1.5}>
          <path d="M1 8l5 5L19 1" />
        </Icon>
      </FieldButton>
      <FieldButton aria-label="Insert function">
        <Fx>fx</Fx>
      </FieldButton>
    </FieldBox>
    <FieldBox>
      <FieldInput aria-label="Formula" defaultValue="8/22/2016" $inset={10} />
      <OpenButton aria-label="Expand formula bar" $end={11}>
        <Chevron w={14} sw={1.8} />
      </OpenButton>
    </FieldBox>
  </FormulaRow>
);

const Arrow = ({ d, w, h }: { d: string; w: number; h: number }) => (
  <svg width={w} height={h} viewBox={`0 0 ${w} ${h}`} fill="#7d7b7f" aria-hidden="true">
    <path d={d} />
  </svg>
);

const SheetView = () => (
  <SheetColumn>
    <GridArea>
      <GridClip>
        <Sheet>
          <colgroup>
            <Column $width={55} />
            <Column $width={98} />
            <Column $width={185} />
            <Column $width={130} />
          </colgroup>
          <thead>
            <tr>
              <Corner>
                <svg width="15" height="15" viewBox="0 0 15 15" fill="#b9b7bb">
                  <path d="M15 0v15H0z" />
                </svg>
              </Corner>
              <ColHead>A</ColHead>
              <ColHead>B</ColHead>
              <ColHead>C</ColHead>
            </tr>
          </thead>
          <tbody>
            {rows.map((r, i) => (
              <SheetRow key={i}>
                <RowHead scope="row">{i + 1}</RowHead>
                {r.map((c, j) => (
                  <Cell key={j} $head={i === 0} $active={i === 16 && j === 0}>
                    {c}
                  </Cell>
                ))}
              </SheetRow>
            ))}
          </tbody>
        </Sheet>
      </GridClip>
      <VScroll>
        <Arrow d="M5 0l5 9H0z" w={10} h={9} />
        <VThumb />
        <Arrow d="M0 0h10L5 8z" w={10} h={8} />
      </VScroll>
    </GridArea>
    <HScroll>
      <Arrow d="M8 0v10L0 5z" w={8} h={10} />
      <HThumb />
      <Arrow d="M0 0v10l8-5z" w={8} h={10} />
    </HScroll>
    <SheetTabs>
      <SheetNav $width={16} $dim aria-label="Previous sheet">
        <Chevron w={12} sw={1.3} dir="left" />
      </SheetNav>
      <SheetNav $width={66} aria-label="Next sheet">
        <Chevron w={12} sw={1.5} dir="right" />
      </SheetNav>
      <SheetNav $width={16} aria-label="All sheets">
        <Icon w={16} h={12} box="0 0 16 12" sw={1.5}>
          <path d="M0 1h16M0 6h16M0 11h16" />
        </Icon>
      </SheetNav>
      <TabGroup>
        <SheetTab $active>melb_data</SheetTab>
        <SheetTab>Sheet1</SheetTab>
      </TabGroup>
      <SheetNav $width={22} aria-label="Add sheet">
        <Plus size={15} sw={1.5} />
      </SheetNav>
    </SheetTabs>
  </SheetColumn>
);

const AnalyzePane = () => (
  <Pane>
    <PaneHead>
      <PaneTitle>Analyze Data</PaneTitle>
      <PlainButton aria-label="Close pane">
        <Cross size={15} sw={1.2} />
      </PlainButton>
    </PaneHead>
    <PaneBody>
      <Cards>
        <Card>
          <CardTitle>'Landsize' by 'Rooms' and 'Bedrooms'</CardTitle>
          <Pivot>
            <thead>
              <tr>
                <PivotHead>Row Labels</PivotHead>
                <PivotHead>Sum of Landsize</PivotHead>
              </tr>
            </thead>
            <tbody>
              {pivot.map((p, i) => (
                <tr key={i}>
                  <PivotCell $group={p.group} $last={p.last}>
                    {p.label}
                  </PivotCell>
                  <PivotCell $group={p.group} $last={p.last} $right>
                    {p.value}
                  </PivotCell>
                </tr>
              ))}
            </tbody>
          </Pivot>
          <CardFoot>
            <InsertButton>
              <Plus size={16} sw={1.3} color="#4b4a4e" />
              Insert PivotTable
            </InsertButton>
            <Helpful href="#feedback">Is this helpful?</Helpful>
          </CardFoot>
          <Pointer width="36" height="54" viewBox="0 0 36 54">
            <path
              d="M2 2v42l10-9 8 14c1 3 7 1 6-3l-6-13 13-2z"
              fill="#fafafb"
              stroke="#2c2b2f"
              strokeWidth="3"
              strokeLinejoin="round"
            />
          </Pointer>
        </Card>
        <Card>
          <CardTitle>'BuildingArea'</CardTitle>
          <ChartBox>
            <AreaChart />
          </ChartBox>
        </Card>
      </Cards>
      <PaneThumb />
    </PaneBody>
  </Pane>
);

const Status = () => (
  <StatusBar>
    <span>Workbook Statistics</span>
    <Totals>
      <span>Average: 3/12/2215</span>
      <span>Count: 45292</span>
      <PlainButton aria-label="Status options">
        <Chevron w={8} sw={2} />
      </PlainButton>
    </Totals>
    <Feedback>Give Feedback to Microsoft</Feedback>
    <ZoomGroup>
      <PlainButton aria-label="Zoom out">
        <Icon w={14} h={14} box="0 0 14 14" sw={1.5}>
          <path d="M0 6h14" />
        </Icon>
      </PlainButton>
      <span>100%</span>
      <PlainButton aria-label="Zoom in">
        <Plus size={15} sw={1.5} />
      </PlainButton>
    </ZoomGroup>
  </StatusBar>
);

export default function App() {
  return (
    <Page>
      <GlobalStyle />
      <Stage>
        <Frame>
          <Window>
            <BrowserChrome />
            <WorkbookHeader />
            <RibbonBar />
            <FormulaBar />
            <Workspace>
              <SheetView />
              <AnalyzePane />
            </Workspace>
            <Status />
          </Window>
        </Frame>
        <Caption>
          <CaptionText>so this</CaptionText>
          <NextWord>hcu</NextWord>
        </Caption>
      </Stage>
    </Page>
  );
}
